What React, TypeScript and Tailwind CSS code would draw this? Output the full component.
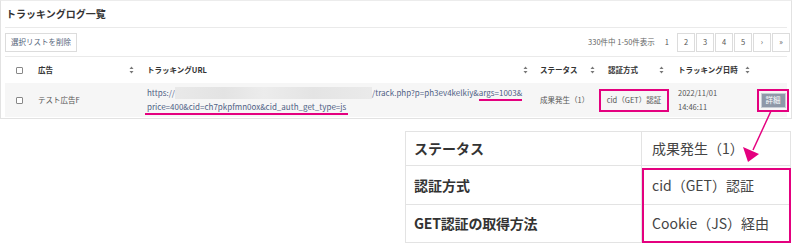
import React from 'react';

const font = { fontFamily: '"Noto Sans CJK JP", "Noto Sans", sans-serif' };

const SortIcon: React.FC = () => (
  <svg width="5" height="8" viewBox="0 0 5 8" className="shrink-0">
    <path d="M2.5 0.5 L4.5 3 L0.5 3 Z" fill="#777" />
    <path d="M2.5 7.5 L4.5 5 L0.5 5 Z" fill="#777" />
  </svg>
);

const Checkbox: React.FC = () => (
  <span className="inline-block w-[7px] h-[7px] border border-[#888] rounded-[1px] bg-white" />
);

const pages = ['2', '3', '4', '5', '›', '»'];

const App: React.FC = () => {
  return (
    <div className="relative w-[796px] h-[244px] bg-white overflow-hidden text-[#555]" style={font}>
      {/* tracking log panel */}
      <div className="w-[792px] h-[119px] border border-[#e2e2e2] border-t-[#ececec] px-[4px]">
        <div className="h-[27px] flex items-center border-b border-[#eaeaea] pl-[1px]">
          <h1 className="text-[10px] font-bold text-[#333] leading-none">トラッキングログ一覧</h1>
        </div>

        <div className="h-[29px] flex items-center justify-between border-b border-[#eaeaea]">
          <button className="h-[19px] w-[72px] border border-[#dcdcdc] bg-white text-[7.5px] text-[#56657a] leading-none">
            選択リストを削除
          </button>
          <div className="flex items-center -mr-[3px]">
            <span className="text-[7.5px] text-[#666] mr-[10px]">330件中 1-50件表示</span>
            <span className="text-[7.5px] text-[#555] mr-[8px]">1</span>
            <div className="flex gap-[1px]">
              {pages.map((p) => (
                <span
                  key={p}
                  className="w-[18px] h-[19px] border border-[#dcdcdc] flex items-center justify-center text-[7.5px] text-[#555]"
                >
                  {p}
                </span>
              ))}
            </div>
          </div>
        </div>

        {/* header row */}
        <div className="grid grid-cols-[28px_109px_393px_68px_70px_79px_1fr] h-[26px] items-center text-[7.5px] font-bold text-[#333]">
          <div className="flex justify-center">
            <Checkbox />
          </div>
          <div className="flex items-center justify-between pl-[5px] pr-[8px]">
            <span>広告</span>
            <SortIcon />
          </div>
          <div className="flex items-center justify-between pl-[5px] pr-[7px]">
            <span>トラッキングURL</span>
            <SortIcon />
          </div>
          <div className="flex items-center justify-between pl-[5px] pr-[8px]">
            <span>ステータス</span>
            <SortIcon />
          </div>
          <div className="flex items-center justify-between pl-[5px] pr-[9px]">
            <span>認証方式</span>
            <SortIcon />
          </div>
          <div className="flex items-center gap-[7px] pl-[5px]">
            <span>トラッキング日時</span>
            <SortIcon />
          </div>
          <div />
        </div>

        {/* body row */}
        <div className="grid grid-cols-[28px_109px_393px_68px_70px_79px_1fr] h-[34px] items-center bg-[#f6f6f6] text-[7.5px] text-[#555]">
          <div className="flex justify-center">
            <Checkbox />
          </div>
          <div className="pl-[5px]">テスト広告F</div>
          <div className="pl-[5px] text-[8px] text-[#4f6185] leading-[14px] whitespace-nowrap">
            <div className="flex items-center">
              <span>https://</span>
              <span className="inline-block w-[197px] h-[12px] bg-[linear-gradient(90deg,#e9e9e9,#e3e3e3_25%,#ececec_45%,#e4e4e4_70%,#eaeaea)]" />
              <span>/track.php?p=ph3ev4kelkiy&amp;</span>
              <span className="border-b-2 border-[#e4007f] leading-[12px] translate-y-[1px]">args=1003&amp;</span>
            </div>
            <div>
              <span className="inline-block border-b-2 border-[#e4007f] leading-[12px] -ml-[2px] px-[2px]">
                price=400&amp;cid=ch7pkpfmn0ox&amp;cid_auth_get_type=js
              </span>
            </div>
          </div>
          <div className="pl-[5px]">成果発生（1）</div>
          <div>
            <div className="-ml-[4px] w-[70px] h-[23px] border-2 border-[#e4007f] flex items-center justify-center">
              cid（GET）認証
            </div>
          </div>
          <div className="pl-[5px] leading-[14px]">
            <div>2022/11/01</div>
            <div>14:46:11</div>
          </div>
          <div className="pl-[5px]">
            <div className="w-[32px] h-[23px] border-2 border-[#e4007f] flex items-center justify-center">
              <span className="w-[25px] h-[15px] bg-[#8e98a8] border border-[#c8cdd5] text-white text-[7.5px] flex items-center justify-center">
                詳細
              </span>
            </div>
          </div>
        </div>
      </div>

      {/* detail table */}
      <div className="relative mt-[12px] ml-[405px] w-[386px] border border-[#e3e3e3] text-[14px]">
        <div className="flex h-[34px] border-b border-[#e3e3e3]">
          <div className="w-[236px] border-r border-[#e3e3e3] pl-[8px] flex items-center font-bold text-[#333]">ステータス</div>
          <div className="flex-1 pl-[10px] flex items-center text-[#444]">成果発生（1）</div>
        </div>
        <div className="flex h-[39px] border-b border-[#e3e3e3]">
          <div className="w-[236px] border-r border-[#e3e3e3] pl-[8px] flex items-center font-bold text-[#333]">認証方式</div>
          <div className="flex-1 pl-[10px] flex items-center text-[#444]">cid（GET）認証</div>
        </div>
        <div className="flex h-[37px]">
          <div className="w-[236px] border-r border-[#e3e3e3] pl-[8px] flex items-center font-bold text-[#333] tracking-[-0.2px]">GET認証の取得方法</div>
          <div className="flex-1 pl-[10px] flex items-center text-[#444]">Cookie（JS）経由</div>
        </div>
        <div className="absolute left-[236px] top-[36px] w-[149px] h-[75px] border-2 border-[#e4007f]" />
      </div>

      {/* annotation arrow */}
      <svg className="absolute left-0 top-0 pointer-events-none" width="796" height="244">
        <line x1="771" y1="111" x2="753" y2="150" stroke="#e4007f" strokeWidth="1.5" />
        <path d="M748 162 L743 147 L759 154 Z" fill="#e4007f" />
      </svg>
    </div>
  );
};

export default App;
